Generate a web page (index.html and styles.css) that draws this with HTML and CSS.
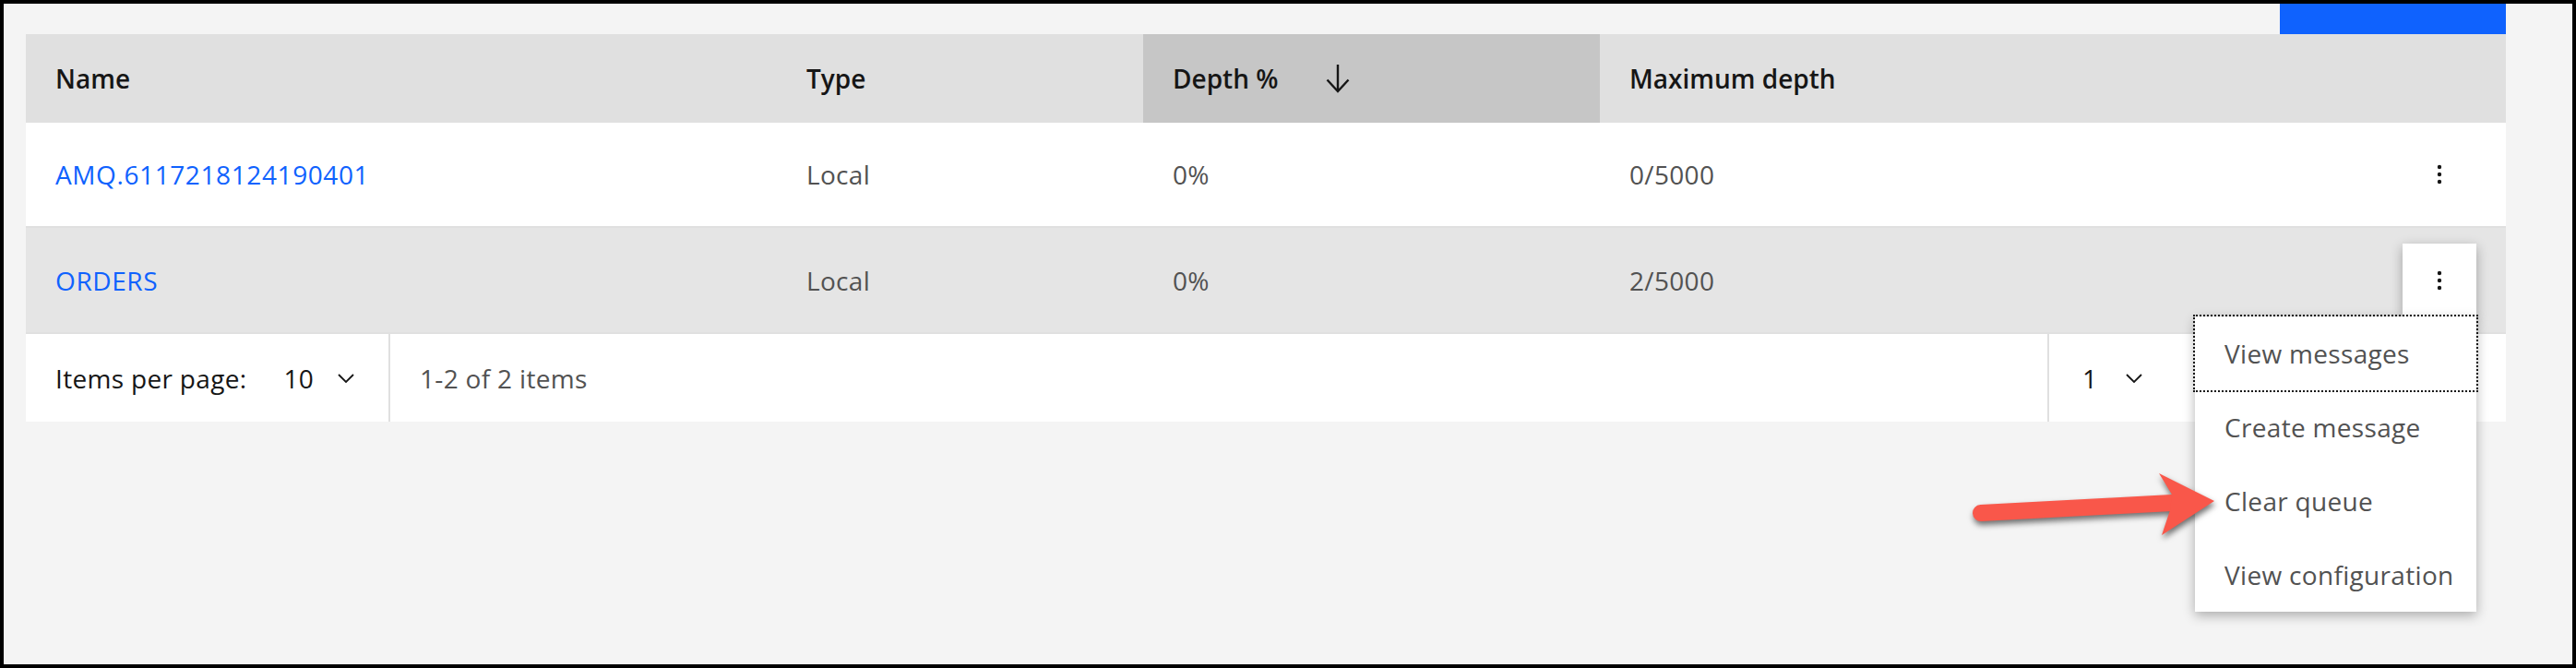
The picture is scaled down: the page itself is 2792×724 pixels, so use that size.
FILE: index.html
```html
<!DOCTYPE html>
<html lang="en">
<head>
<meta charset="utf-8">
<title>Queues</title>
<link rel="stylesheet" href="styles.css">
</head>
<body>
<div class="page">
  <div class="toolbar">
    <button class="btn-primary" aria-label="Create"></button>
  </div>

  <div class="data-table" role="table">
    <div class="row head" role="row">
      <div class="cell th" role="columnheader">Name</div>
      <div class="cell th" role="columnheader">Type</div>
      <div class="cell th sorted" role="columnheader">
        <span>Depth %</span>
        <svg class="sort-icon" width="26" height="32" viewBox="0 0 26 32" aria-hidden="true">
          <path d="M13 1 V30 M1.5 17.5 L13 30 L24.5 17.5" fill="none" stroke="#161616" stroke-width="2.4"/>
        </svg>
      </div>
      <div class="cell th" role="columnheader">Maximum depth</div>
      <div class="cell th act" role="columnheader"></div>
    </div>

    <div class="row r1" role="row">
      <div class="cell" role="cell"><a class="link" href="#">AMQ.6117218124190401</a></div>
      <div class="cell" role="cell">Local</div>
      <div class="cell" role="cell">0%</div>
      <div class="cell" role="cell">0/5000</div>
      <div class="cell act" role="cell">
        <button class="kebab" aria-label="Options">
          <svg width="32" height="32" viewBox="0 0 32 32" aria-hidden="true">
            <circle cx="16" cy="8" r="2.2" fill="#161616"/>
            <circle cx="16" cy="16" r="2.2" fill="#161616"/>
            <circle cx="16" cy="24" r="2.2" fill="#161616"/>
          </svg>
        </button>
      </div>
    </div>

    <div class="row r2" role="row">
      <div class="cell" role="cell"><a class="link" href="#">ORDERS</a></div>
      <div class="cell" role="cell">Local</div>
      <div class="cell" role="cell">0%</div>
      <div class="cell" role="cell">2/5000</div>
      <div class="cell act" role="cell">
        <div class="overflow">
          <button class="kebab open" aria-label="Options" aria-expanded="true">
            <svg width="32" height="32" viewBox="0 0 32 32" aria-hidden="true">
              <circle cx="16" cy="8" r="2.2" fill="#161616"/>
              <circle cx="16" cy="16" r="2.2" fill="#161616"/>
              <circle cx="16" cy="24" r="2.2" fill="#161616"/>
            </svg>
          </button>
          <ul class="menu" role="menu">
            <li class="menu-item focused" role="menuitem">View messages</li>
            <li class="menu-item" role="menuitem">Create message</li>
            <li class="menu-item" role="menuitem">Clear queue</li>
            <li class="menu-item" role="menuitem">View configuration</li>
          </ul>
        </div>
      </div>
    </div>
  </div>

  <div class="pagination">
    <div class="pg-left">
      <span class="pg-label">Items per page:</span>
      <span class="pg-select">
        <span>10</span>
        <svg class="chev" width="18" height="10" viewBox="0 0 18 10" aria-hidden="true">
          <path d="M1 1 L9 9 L17 1" fill="none" stroke="#161616" stroke-width="1.8"/>
        </svg>
      </span>
    </div>
    <div class="pg-range">1-2 of 2 items</div>
    <div class="pg-right">
      <span class="pg-select page">
        <span>1</span>
        <svg class="chev" width="18" height="10" viewBox="0 0 18 10" aria-hidden="true">
          <path d="M1 1 L9 9 L17 1" fill="none" stroke="#161616" stroke-width="1.8"/>
        </svg>
      </span>
      <span class="pg-of">of 1 page</span>
      <span class="pg-buttons">
        <button class="pg-btn" aria-label="Previous page"></button>
        <button class="pg-btn" aria-label="Next page"></button>
      </span>
    </div>
  </div>
</div>

<svg class="annot" width="300" height="100" viewBox="0 0 300 100" aria-hidden="true">
  <g class="annot-shape">
    <path d="M27 56 L234 45" stroke="#f9574a" stroke-width="18" stroke-linecap="round" fill="none"/>
    <polygon points="220,13 280,43 223,80 232,53 234,36" fill="#f9574a"/>
  </g>
</svg>
</body>
</html>
```

FILE: styles.css
```css
* {
  box-sizing: border-box;
}

html, body {
  margin: 0;
  padding: 0;
}

body {
  position: relative;
  height: 724px;
  border: 4px solid #000;
  background: #f4f4f4;
  overflow: hidden;
  font-family: "Open Sans", "Liberation Sans", sans-serif;
  font-size: 28px;
  letter-spacing: 0.32px;
  color: #161616;
}

.page {
  padding: 0 72px 0 24px;
}

.toolbar {
  display: flex;
  justify-content: flex-end;
  height: 33px;
}

.btn-primary {
  width: 245px;
  height: 33px;
  border: 0;
  padding: 0;
  background: #0f62fe;
}

.data-table {
  display: flex;
  flex-direction: column;
}

.row {
  display: grid;
  grid-template-columns: 814px 397px 495px 870px 1fr;
}

.head {
  height: 96px;
  background: #e0e0e0;
}

.r1 {
  height: 112px;
  background: #fff;
}

.r2 {
  height: 115px;
  background: #e5e5e5;
  border-top: 2px solid #e0e0e0;
}

.cell {
  display: flex;
  align-items: center;
  padding: 0 32px;
  color: #525252;
  white-space: nowrap;
}

.th {
  color: #161616;
  font-weight: 600;
  letter-spacing: 0;
}

.sorted {
  background: #c6c6c6;
}

.sort-icon {
  margin-left: 52px;
  flex: none;
}

.cell.act {
  padding: 0;
}

.link {
  color: #0f62fe;
  text-decoration: none;
  letter-spacing: 0.6px;
}

.kebab {
  width: 80px;
  height: 80px;
  border: 0;
  padding: 0;
  background: transparent;
  display: flex;
  align-items: center;
  justify-content: center;
}

.overflow {
  position: relative;
}

.kebab.open {
  background: #fff;
  box-shadow: 0 4px 12px rgba(0, 0, 0, 0.3);
}

.menu {
  position: absolute;
  top: 79px;
  right: 0;
  z-index: 10;
  width: 305px;
  margin: 0;
  padding: 0;
  list-style: none;
  background: #fff;
  box-shadow: 0 4px 12px rgba(0, 0, 0, 0.3);
}

.menu-item {
  height: 80px;
  display: flex;
  align-items: center;
  padding: 0 32px;
  color: #525252;
  white-space: nowrap;
}

.menu-item.focused {
  outline: 2px dotted #161616;
}

.pagination {
  display: flex;
  height: 97px;
  background: #fff;
  border-top: 2px solid #e0e0e0;
}

.pg-left {
  width: 393px;
  display: flex;
  align-items: center;
  padding-left: 32px;
  color: #161616;
}

.pg-select {
  display: flex;
  align-items: center;
  margin-left: 40px;
  color: #161616;
}

.pg-select .chev {
  margin-left: 26px;
}

.pg-range {
  flex: 1;
  display: flex;
  align-items: center;
  padding-left: 32px;
  border-left: 2px solid #e0e0e0;
  color: #525252;
}

.pg-right {
  width: 497px;
  display: flex;
  align-items: center;
  border-left: 2px solid #e0e0e0;
}

.pg-select.page {
  margin-left: 12px;
}

.pg-select.page .chev {
  margin-left: 31px;
}

.pg-of {
  margin-left: 40px;
  color: #525252;
}

.pg-buttons {
  margin-left: auto;
  display: flex;
  align-self: stretch;
}

.pg-btn {
  width: 96px;
  border: 0;
  border-left: 2px solid #e0e0e0;
  background: #fff;
}

.annot {
  position: absolute;
  left: 2116px;
  top: 496px;
  z-index: 20;
  overflow: visible;
}

.annot-shape {
  filter: drop-shadow(1px 4px 3px rgba(0, 0, 0, 0.55));
}
```
